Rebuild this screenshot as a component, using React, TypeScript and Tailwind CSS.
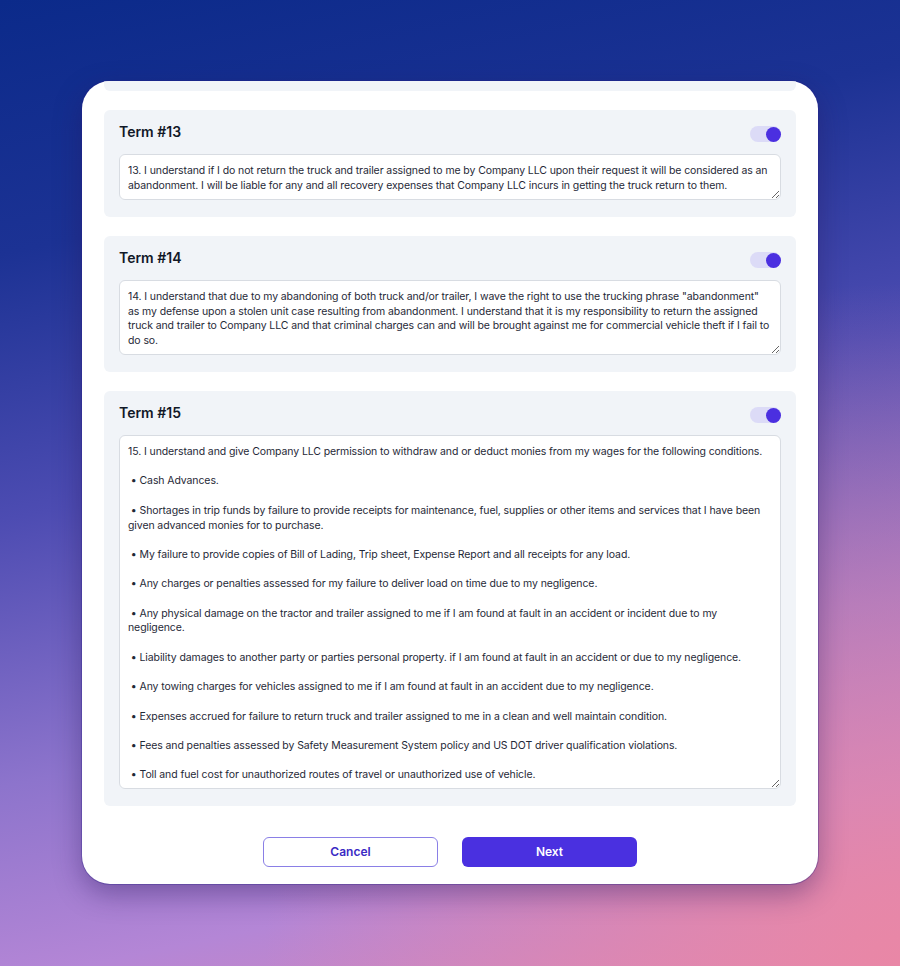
import { useState } from "react";

interface Term {
  id: number;
  text: string;
  height: string;
}

const terms: Term[] = [
  {
    id: 13,
    height: "h-[46px]",
    text: "13. I understand if I do not return the truck and trailer assigned to me by Company LLC upon their request it will be considered as an abandonment. I will be liable for any and all recovery expenses that Company LLC incurs in getting the truck return to them.",
  },
  {
    id: 14,
    height: "h-[75px]",
    text: '14. I understand that due to my abandoning of both truck and/or trailer, I wave the right to use the trucking phrase "abandonment" as my defense upon a stolen unit case resulting from abandonment. I understand that it is my responsibility to return the assigned truck and trailer to Company LLC and that criminal charges can and will be brought against me for commercial vehicle theft if I fail to do so.',
  },
  {
    id: 15,
    height: "h-[354px]",
    text: [
      "15. I understand and give Company LLC permission to withdraw and or deduct monies from my wages for the following conditions.",
      " • Cash Advances.",
      " • Shortages in trip funds by failure to provide receipts for maintenance, fuel, supplies or other items and services that I have been given advanced monies for to purchase.",
      " • My failure to provide copies of Bill of Lading, Trip sheet, Expense Report and all receipts for any load.",
      " • Any charges or penalties assessed for my failure to deliver load on time due to my negligence.",
      " • Any physical damage on the tractor and trailer assigned to me if I am found at fault in an accident or incident due to my negligence.",
      " • Liability damages to another party or parties personal property. if I am found at fault in an accident or due to my negligence.",
      " • Any towing charges for vehicles assigned to me if I am found at fault in an accident due to my negligence.",
      " • Expenses accrued for failure to return truck and trailer assigned to me in a clean and well maintain condition.",
      " • Fees and penalties assessed by Safety Measurement System policy and US DOT driver qualification violations.",
      " • Toll and fuel cost for unauthorized routes of travel or unauthorized use of vehicle.",
    ].join("\n\n"),
  },
];

function Toggle() {
  const [on, setOn] = useState(true);
  return (
    <button
      onClick={() => setOn(!on)}
      className={`relative mt-[5px] h-[16px] w-[31px] rounded-full ${on ? "bg-[#dcdbf7]" : "bg-gray-200"}`}
    >
      <span
        className={`absolute top-[0.5px] h-[15px] w-[15px] rounded-full bg-[#4b2fe0] ${on ? "right-0" : "left-0"}`}
      />
    </button>
  );
}

function TermPanel({ term }: { term: Term }) {
  return (
    <div className="rounded-[6px] bg-[#f1f4f8] px-[15px] pt-[11px] pb-[17px]">
      <div className="flex h-[33px] items-start justify-between">
        <h3 className="pt-px text-[14px] leading-[20px] font-semibold text-[#111827]">Term #{term.id}</h3>
        <Toggle />
      </div>
      <textarea
        readOnly
        defaultValue={term.text}
        className={`block w-full ${term.height} rounded-[6px] border border-[#d8dce2] bg-white px-2 pt-[9px] pb-[5px] text-[10.5px] leading-[14.7px] tracking-[-0.1px] text-[#1f2937] outline-none`}
      />
    </div>
  );
}

export default function App() {
  return (
    <div
      className="flex min-h-screen justify-center bg-[radial-gradient(ellipse_at_100%_100%,#e987a6_0%,rgba(233,135,166,0)_50%),linear-gradient(168deg,#0b2a8a_0%,#1c3294_22%,#4d4cb2_45%,#8d74cc_68%,#b486d6_85%,#d988b8_100%)] pt-[81px] font-['Inter',sans-serif]"
    >
      <div className="h-[803px] w-[736px] overflow-hidden rounded-[28px] bg-white px-[22px] shadow-[0_0_0_1px_rgba(40,30,140,0.3),0_10px_28px_rgba(40,20,90,0.4)]">
        <div className="h-[10px] rounded-b-[6px] bg-[#f1f4f8]" />
        <div className="mt-[19px] flex flex-col gap-[19px]">
          {terms.map((t) => (
            <TermPanel key={t.id} term={t} />
          ))}
        </div>
        <div className="mt-[31px] flex justify-center gap-[24px]">
          <button className="h-[30px] w-[175px] rounded-[6px] border border-[#8a7fe6] bg-white text-[12px] font-semibold text-[#3b2bc4]">
            Cancel
          </button>
          <button className="h-[30px] w-[175px] rounded-[6px] bg-[#4a30e0] text-[12px] font-semibold text-white">
            Next
          </button>
        </div>
      </div>
    </div>
  );
}
